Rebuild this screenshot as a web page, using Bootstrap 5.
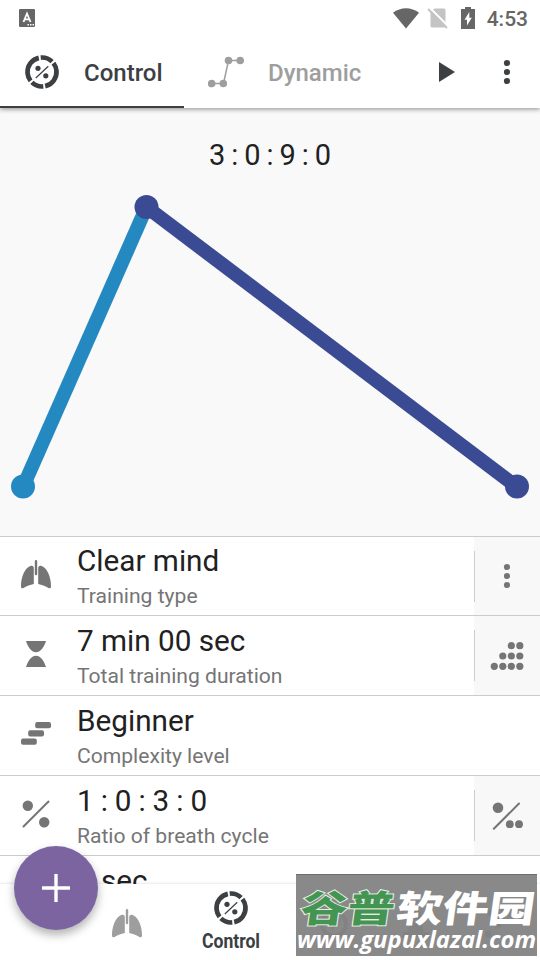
<!DOCTYPE html>
<html lang="en">
<head>
  <meta charset="UTF-8" />
  <meta name="viewport" content="width=device-width, initial-scale=1.0"/>
  <title>Control</title>
  <link href="https://cdn.jsdelivr.net/npm/bootstrap@5.3.0/dist/css/bootstrap.min.css" rel="stylesheet">
  <style>
    body {
      font-family: Roboto, sans-serif;
      color: #212121;
      background: #fff;
    }
    svg {
      display: block;
      flex: none;
    }
    .screen {
      width: 540px;
      height: 960px;
    }
    .status-bar {
      height: 36px;
      padding: 0 12px 0 19px;
      color: #666;
      flex: none;
    }
    .battery {
      margin-left: 12px;
    }
    .clock {
      font-size: 21px;
      font-weight: 500;
      line-height: 36px;
      padding-top: 2px;
      margin-left: 12px;
    }
    .app-bar {
      height: 72px;
      color: #3c4043;
      box-shadow: 0 1px 5px rgba(0, 0, 0, .45);
      clip-path: inset(0 0 -10px 0);
      z-index: 2;
      flex: none;
    }
    .tab-item {
      width: 184px;
      padding: 2px 0 0 24px;
      font-size: 24px;
      font-weight: 500;
      border-bottom: 2px solid transparent;
    }
    .tab-item.current {
      border-color: #3c4043;
    }
    .tab-item span {
      margin-left: 24px;
      padding-top: 2px;
    }
    .tab-item.idle {
      color: #9e9e9e;
    }
    .app-actions {
      padding-right: 25px;
    }
    .chart {
      height: 428px;
      background: #f9f9f9;
      flex: none;
    }
    .chart-title {
      font-size: 29px;
      line-height: 34px;
      padding-top: 30px;
      height: 64px;
      word-spacing: -1.2px;
    }
    .settings {
      border-top: 1px solid #cbcbcb;
    }
    .setting {
      height: 80px;
      border-bottom: 1px solid #cbcbcb;
      flex: none;
    }
    .setting:first-child {
      height: 79px;
    }
    .setting-icon {
      width: 72px;
      padding-bottom: 4px;
      color: #757575;
    }
    .setting-text {
      padding: 5px 0 0 5px;
    }
    .setting:first-child .setting-text {
      padding-top: 4px;
    }
    .setting-name {
      font-size: 29.7px;
      line-height: 40px;
    }
    .ratio {
      word-spacing: -.4px;
    }
    .setting-hint {
      font-size: 21.1px;
      line-height: 30px;
      color: #757575;
    }
    .setting-side {
      width: 66px;
      padding-right: 2px;
      background: #f8f8f8;
      color: #757575;
    }
    .side-line {
      width: 1px;
      height: 51px;
      background: #cbcbcb;
    }
    .bottom-bar {
      height: 76px;
      padding-left: 4px;
      background: #fff;
      color: #9e9e9e;
      box-shadow: 0 0 3px rgba(0, 0, 0, .16);
      z-index: 2;
      flex: none;
    }
    .bottom-item {
      width: 82px;
      padding-top: 3px;
    }
    .bottom-item.current {
      width: 125px;
      padding-top: 6px;
      color: #3c4043;
    }
    .bottom-label {
      font-size: 20px;
      font-weight: 700;
      line-height: 24px;
      transform: scaleX(.88);
      margin-top: 3px;
    }
    .fab {
      left: 14px;
      top: 846px;
      width: 84px;
      height: 84px;
      background: #7b649f;
      box-shadow: 0 5px 10px rgba(0, 0, 0, .3);
      z-index: 3;
    }
    .site-stamp {
      left: 296px;
      top: 874px;
      width: 241px;
      height: 82px;
      background: rgba(128, 128, 128, .93);
      border-top: 1px solid #6c6c6c;
      z-index: 4;
    }
  </style>
</head>
<body>

  <svg width="0" height="0" class="position-absolute">
    <defs>
      <symbol id="gauge" viewBox="0 0 36 36">
        <circle cx="18" cy="18" r="14.5" fill="none" stroke="currentColor" stroke-width="4.7" pathLength="360" stroke-dasharray="49 8 115 8" transform="rotate(-95 18 18)"/>
        <circle cx="14" cy="14.3" r="2.6" fill="currentColor"/>
        <circle cx="21.8" cy="21.8" r="2.6" fill="currentColor"/>
        <path d="M11.8 24 24.3 12.2" stroke="currentColor" stroke-width="1.2"/>
      </symbol>
      <symbol id="lungs" viewBox="0 0 30 29">
        <path fill="currentColor" d="M13.8 1.2a1.2 1.2 0 0 1 2.4 0V14a1.2 1.2 0 0 1-2.4 0zM10 5.800C4 7.500 0 17 0 26c0 2.300 1 2.900 3 1.800 3-1.900 6-3 9.800-3.900V8.500c0-2-1-3.100-2.800-2.700zM20 5.800C26 7.500 30 17 30 26c0 2.300-1 2.900-3 1.800-3-1.900-6-3-9.800-3.900V8.500c0-2 1-3.100 2.800-2.700z"/>
      </symbol>
      <symbol id="more" viewBox="0 0 8 26">
        <circle cx="4" cy="4" r="3.1" fill="currentColor"/>
        <circle cx="4" cy="13" r="3.1" fill="currentColor"/>
        <circle cx="4" cy="22" r="3.1" fill="currentColor"/>
      </symbol>
    </defs>
  </svg>

  <div class="screen d-flex flex-column position-relative overflow-hidden">

    <div class="status-bar d-flex align-items-center">
      <svg width="16" height="18" viewBox="0 0 16 18">
        <rect width="16" height="18" rx="1" fill="#666"/>
        <path d="M4.500 13 8 4.500 11.500 13M5.800 10.300h4.400" fill="none" stroke="#fff" stroke-width="1.800"/>
        <path d="M8.500 15.800h6.500" stroke="#fff" stroke-width="1.400" stroke-dasharray="1.500 1"/>
      </svg>
      <svg class="ms-auto" width="26" height="21" viewBox="0 0 26 21">
        <path d="M0 4.800C7.500-1.300 18.500-1.300 26 4.800L13 20.500z" fill="#666"/>
      </svg>
      <svg class="ms-2" width="22" height="22" viewBox="0 0 22 22">
        <path d="M7.500 1.500H17q1.500 0 1.500 1.500v16q0 1.500-1.500 1.500H5Q3.500 20.500 3.500 19V5.500z" fill="#c4c4c4"/>
        <path d="M2.500 .5 21.500 19.500" stroke="#fff" stroke-width="2"/>
        <path d="M1 2 20 21" stroke="#c4c4c4" stroke-width="2"/>
      </svg>
      <svg class="battery" width="14" height="22" viewBox="0 0 14 22">
        <path d="M4 0h6v2h4v20H0V2h4z" fill="#666"/>
        <path d="M8.300 5v5.800h2.500L6 18.500v-5.800H3.500z" fill="#fff"/>
      </svg>
      <div class="clock">4:53</div>
    </div>

    <header class="app-bar d-flex bg-white position-relative">
      <div class="tab-item current d-flex align-items-center">
        <svg width="36" height="36"><use href="#gauge"/></svg>
        <span>Control</span>
      </div>
      <div class="tab-item idle d-flex align-items-center">
        <svg width="36" height="32" viewBox="0 0 36 32">
          <path d="M4 27.500h11.500l5-23H32" fill="none" stroke="currentColor" stroke-width="1.500"/>
          <circle cx="3.700" cy="27.500" r="3.800" fill="currentColor"/>
          <circle cx="15.300" cy="27.500" r="3.800" fill="currentColor"/>
          <circle cx="20.500" cy="4.500" r="3.800" fill="currentColor"/>
          <circle cx="32.200" cy="4.500" r="3.800" fill="currentColor"/>
        </svg>
        <span>Dynamic</span>
      </div>
      <div class="app-actions ms-auto d-flex align-items-center">
        <svg width="16" height="20" viewBox="0 0 16 20"><path d="M0 0 16 10 0 20z" fill="currentColor"/></svg>
        <svg class="ms-5 me-1" width="8" height="26"><use href="#more"/></svg>
      </div>
    </header>

    <section class="chart">
      <div class="chart-title text-center">3 : 0 : 9 : 0</div>
      <svg width="540" height="340" viewBox="0 172 540 340">
        <path d="M23 487 146.500 207" stroke="#2589c1" stroke-width="14"/>
        <path d="M146.500 207 517 487" stroke="#3b4b93" stroke-width="14"/>
        <circle cx="23" cy="486.500" r="12" fill="#2589c1"/>
        <circle cx="146.500" cy="207" r="12" fill="#3b4b93"/>
        <circle cx="517" cy="486.500" r="12" fill="#3b4b93"/>
      </svg>
    </section>

    <main class="settings flex-grow-1 overflow-hidden d-flex flex-column">
      <div class="setting d-flex">
        <div class="setting-icon d-flex align-items-center justify-content-center">
          <svg width="30" height="29"><use href="#lungs"/></svg>
        </div>
        <div class="setting-text flex-grow-1">
          <div class="setting-name">Clear mind</div>
          <div class="setting-hint">Training type</div>
        </div>
        <div class="setting-side d-flex align-items-center">
          <div class="side-line"></div>
          <svg class="mx-auto" width="8" height="26"><use href="#more"/></svg>
        </div>
      </div>
      <div class="setting d-flex">
        <div class="setting-icon d-flex align-items-center justify-content-center">
          <svg width="20" height="26" viewBox="0 0 20 26">
            <path fill="currentColor" d="M0 0h20c-1.500 5-5 11.300-10 11.300S1.500 5 0 0zM0 26h20c-1.500-5-5-11.300-10-11.300S1.500 21 0 26z"/>
          </svg>
        </div>
        <div class="setting-text flex-grow-1">
          <div class="setting-name">7 min 00 sec</div>
          <div class="setting-hint">Total training duration</div>
        </div>
        <div class="setting-side d-flex align-items-center">
          <div class="side-line"></div>
          <svg class="mx-auto" width="34" height="28" viewBox="0 0 34 28">
            <g fill="currentColor">
              <circle cx="21.300" cy="3.700" r="3.600"/><circle cx="29.800" cy="3.700" r="3.600"/>
              <circle cx="12.800" cy="14" r="3.600"/><circle cx="21.300" cy="14" r="3.600"/><circle cx="29.800" cy="14" r="3.600"/>
              <circle cx="4.300" cy="24.300" r="3.600"/><circle cx="12.800" cy="24.300" r="3.600"/><circle cx="21.300" cy="24.300" r="3.600"/><circle cx="29.800" cy="24.300" r="3.600"/>
            </g>
          </svg>
        </div>
      </div>
      <div class="setting d-flex">
        <div class="setting-icon d-flex align-items-center justify-content-center">
          <svg width="30" height="23" viewBox="0 0 30 23">
            <g fill="currentColor">
              <rect x="14.200" width="15.800" height="6.200" rx="2"/>
              <rect x="7.200" y="8.300" width="15.800" height="6.200" rx="2"/>
              <rect y="16.500" width="15.800" height="6.200" rx="2"/>
            </g>
          </svg>
        </div>
        <div class="setting-text">
          <div class="setting-name">Beginner</div>
          <div class="setting-hint">Complexity level</div>
        </div>
      </div>
      <div class="setting d-flex">
        <div class="setting-icon d-flex align-items-center justify-content-center">
          <svg width="28" height="28" viewBox="0 0 28 28">
            <circle cx="5.800" cy="5.800" r="5.200" fill="currentColor"/>
            <circle cx="22.200" cy="22.200" r="5.200" fill="currentColor"/>
            <path d="M1.500 26.500 26.500 1.500" stroke="currentColor" stroke-width="2" stroke-linecap="round"/>
          </svg>
        </div>
        <div class="setting-text flex-grow-1">
          <div class="setting-name ratio">1 : 0 : 3 : 0</div>
          <div class="setting-hint">Ratio of breath cycle</div>
        </div>
        <div class="setting-side d-flex align-items-center">
          <div class="side-line"></div>
          <svg class="mx-auto" width="32" height="28" viewBox="0 0 32 28">
            <circle cx="7" cy="5.800" r="5.300" fill="currentColor"/>
            <circle cx="18.800" cy="22.200" r="3.900" fill="currentColor"/>
            <circle cx="28" cy="22.200" r="3.900" fill="currentColor"/>
            <path d="M2.800 26.800 28 1.500" stroke="currentColor" stroke-width="2" stroke-linecap="round"/>
          </svg>
        </div>
      </div>
      <div class="setting d-flex">
        <div class="setting-icon"></div>
        <div class="setting-text"><div class="setting-name">5 sec</div></div>
      </div>
    </main>

    <nav class="bottom-bar d-flex position-relative">
      <div class="bottom-item"></div>
      <div class="bottom-item d-flex align-items-center justify-content-center">
        <svg width="30" height="29"><use href="#lungs"/></svg>
      </div>
      <div class="bottom-item current d-flex flex-column align-items-center">
        <svg width="36" height="36"><use href="#gauge"/></svg>
        <div class="bottom-label">Control</div>
      </div>
      <div class="bottom-item d-flex align-items-center justify-content-center">
        <svg width="30" height="30" viewBox="0 0 30 30">
          <circle cx="15" cy="15" r="12" fill="none" stroke="currentColor" stroke-width="4"/>
          <path d="m9 15 5 4 7-9" fill="none" stroke="currentColor" stroke-width="3"/>
        </svg>
      </div>
      <div class="bottom-item d-flex align-items-center justify-content-center">
        <svg width="26" height="30" viewBox="0 0 26 30">
          <circle cx="13" cy="6" r="5" fill="currentColor"/>
          <path d="M8 12h10l3 11h5v5H0v-5h5z" fill="currentColor"/>
        </svg>
      </div>
      <div class="bottom-item d-flex align-items-center justify-content-center">
        <svg width="28" height="30" viewBox="0 0 28 30">
          <g fill="currentColor">
            <circle cx="7" cy="4" r="3.500"/><circle cx="20" cy="4" r="3.500"/>
            <circle cx="14" cy="15" r="3.500"/><circle cx="4" cy="25" r="3.500"/>
          </g>
        </svg>
      </div>
    </nav>

    <div class="fab rounded-circle position-absolute d-flex align-items-center justify-content-center">
      <svg width="28" height="28" viewBox="0 0 28 28"><path d="M14 0v28M0 14h28" stroke="#fff" stroke-width="3.400"/></svg>
    </div>

    <div class="site-stamp position-absolute">
      <svg width="241" height="81" viewBox="0 0 241 81">
        <g font-family="'Noto Sans CJK SC', sans-serif" font-weight="900" font-size="43" transform="translate(3 46.500) skewX(-8) scale(1 .86)">
          <text textLength="94" lengthAdjust="spacingAndGlyphs" fill="#459552" stroke="#e4eee5" stroke-width="2.200" paint-order="stroke">谷普</text>
          <text x="96" textLength="138" lengthAdjust="spacingAndGlyphs" fill="#fff">软件园</text>
        </g>
        <text x="1" y="73" font-family="'Open Sans', sans-serif" font-weight="700" font-style="italic" font-size="24" fill="#fff" textLength="239" lengthAdjust="spacingAndGlyphs">www.gupuxlazal.com</text>
      </svg>
    </div>

  </div>

  <script src="https://cdn.jsdelivr.net/npm/bootstrap@5.3.0/dist/js/bootstrap.bundle.min.js"></script>
</body>
</html>
